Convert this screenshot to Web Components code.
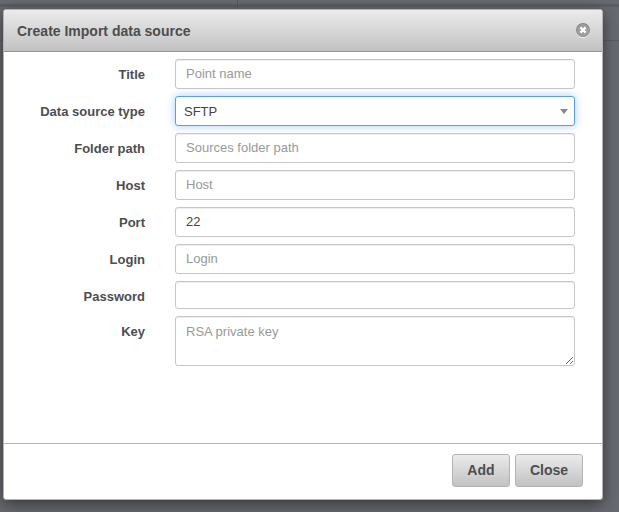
<!DOCTYPE html>
<html lang="en">
<head>
<meta charset="utf-8">
<title>Create Import data source</title>
<style>
  html, body { margin: 0; height: 100%; }
  body { font: 13px/20px "Liberation Sans", Arial, sans-serif; color: #4d4d4f; background: #676a70; overflow: hidden; }
</style>
</head>
<body>
<page-backdrop>
  <modal-dialog heading="Create Import data source">
    <form-field placeholder="Point name">Title</form-field>
    <select-field value="SFTP">Data source type</select-field>
    <form-field placeholder="Sources folder path">Folder path</form-field>
    <form-field placeholder="Host">Host</form-field>
    <form-field value="22">Port</form-field>
    <form-field placeholder="Login">Login</form-field>
    <form-field type="password">Password</form-field>
    <text-field placeholder="RSA private key">Key</text-field>
    <action-button slot="actions">Add</action-button>
    <action-button slot="actions">Close</action-button>
  </modal-dialog>
</page-backdrop>
<script>
const define = (name, render) => customElements.define(name, class extends HTMLElement {
  constructor() {
    super();
    this.attachShadow({ mode: "open" });
  }
  connectedCallback() {
    this.shadowRoot.innerHTML = render(this);
  }
});

const fieldStyles = `
  :host { display: grid; grid-template-columns: 141px minmax(0, 1fr); column-gap: 30px; }
  label { font-weight: bold; text-align: right; padding-top: 6px; }
  input, select, textarea {
    display: block; box-sizing: border-box; width: 100%; height: 30px; margin: 0;
    font: 13px/20px "Liberation Sans", Arial, sans-serif; color: #444;
    background: #fff; border: 1px solid #c6c6c6; border-radius: 3px; outline: none;
    box-shadow: inset 0 1px 1px #00000013;
  }
  input { padding: 3px 10px 5px; }
  ::placeholder { color: #999; opacity: 1; }
`;

define("page-backdrop", () => `
  <style>
    :host {
      display: flex; box-sizing: border-box; min-height: 100%; padding: 9px 16px 12px 3px;
      background:
        linear-gradient(#55585e, #55585e) 57px 0 / 1px 9px no-repeat,
        linear-gradient(#5b5e64, #5b5e64) 0 40px / 100% 1px no-repeat,
        linear-gradient(#5b5e64, #5b5e64) 0 4px / 100% 3px no-repeat,
        #676a70;
      background-position: 237px 0, 0 40px, 0 4px, 0 0;
    }
    ::slotted(*) { flex: 1; }
  </style>
  <slot></slot>`);

define("modal-dialog", el => `
  <style>
    :host {
      display: flex; flex-direction: column; box-sizing: border-box; background: #fff;
      border: 1px solid #b3b3b3; border-radius: 3px; box-shadow: 0 4px 16px #00000080;
    }
    header {
      display: flex; align-items: flex-start; justify-content: space-between;
      padding: 11px 12px 9px 13px; border-bottom: 1px solid #949494;
      border-radius: 2px 2px 0 0; background: linear-gradient(#ebebeb, #c2c2c2);
    }
    h1 { margin: 0; font-size: 14px; line-height: 21px; }
    .close { display: block; width: 14px; height: 16px; margin-top: 2px; padding: 0; border: 0; background: none; }
    .close svg { display: block; }
    main { flex: 1; display: flex; flex-direction: column; gap: 7px; padding: 7px 27px 20px 0; }
    footer { display: flex; justify-content: flex-end; gap: 5px; padding: 10px 19px 12px; border-top: 1px solid #b3b3b3; }
  </style>
  <header>
    <h1>${el.getAttribute("heading")}</h1>
    <button class="close" type="button" aria-label="Dismiss">
      <svg width="14" height="16" viewBox="0 0 14 16">
        <circle cx="7" cy="8" r="7" fill="#f2f2f2"/>
        <circle cx="7" cy="7" r="7" fill="#858585"/>
        <circle cx="7" cy="7.5" r="6.4" fill="#9d9d9d"/>
        <path d="M4.4 4.4l5.2 5.2M9.6 4.4L4.4 9.6" stroke="#fff" stroke-width="2.3"/>
      </svg>
    </button>
  </header>
  <main><slot></slot></main>
  <footer><slot name="actions"></slot></footer>`);

define("form-field", el => `
  <style>${fieldStyles}
    input[type=password] { height: 28px; }
  </style>
  <label for="control"><slot></slot></label>
  <input id="control" type="${el.getAttribute("type") || "text"}"
    placeholder="${el.getAttribute("placeholder") || ""}" value="${el.getAttribute("value") || ""}">`);

define("text-field", el => `
  <style>${fieldStyles}
    textarea { height: 50px; padding: 5px 10px; resize: vertical; }
  </style>
  <label for="control"><slot></slot></label>
  <textarea id="control" placeholder="${el.getAttribute("placeholder")}"></textarea>`);

define("select-field", el => `
  <style>${fieldStyles}
    .box { display: grid; align-items: center; }
    .box > * { grid-area: 1 / 1; }
    select { appearance: none; padding: 2px 24px 0 8px; border-color: #5e9ee8; box-shadow: 0 0 8px #69aef0a0; }
    svg { justify-self: end; margin-right: 7px; pointer-events: none; }
  </style>
  <label for="control"><slot></slot></label>
  <div class="box">
    <select id="control"><option>${el.getAttribute("value")}</option></select>
    <svg width="8" height="5" viewBox="0 0 8 5"><path d="M0 0h8L4 5z" fill="#888"/></svg>
  </div>`);

define("action-button", () => `
  <style>
    :host { display: block; }
    button {
      display: block; box-sizing: border-box; height: 33px; min-width: 58px; padding: 0 14px 2px;
      font: bold 14px/20px "Liberation Sans", Arial, sans-serif; color: #4d4d4f;
      background: linear-gradient(#ebebeb, #c2c2c2); border: 1px solid #b3b3b3; border-radius: 3px;
    }
  </style>
  <button type="button"><slot></slot></button>`);
</script>
</body>
</html>
